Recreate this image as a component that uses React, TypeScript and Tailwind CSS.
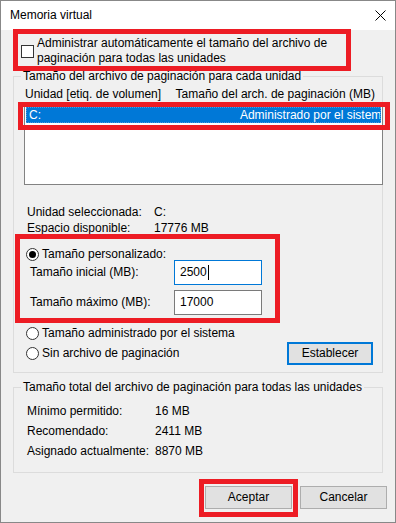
import React from "react";

const Radio = ({ checked = false }: { checked?: boolean }) => (
  <span className="flex h-[13px] w-[13px] shrink-0 items-center justify-center rounded-full border border-[#333333] bg-white">
    {checked && <span className="h-[7px] w-[7px] rounded-full bg-black" />}
  </span>
);

const Button = ({ label, focused = false }: { label: string; focused?: boolean }) => (
  <div
    className={
      focused
        ? "flex h-[23px] w-[86px] items-center justify-center border-2 border-[#0078d7] bg-[#e1e1e1]"
        : "flex h-[23px] w-[87px] items-center justify-center border border-[#adadad] bg-[#e1e1e1]"
    }
  >
    {label}
  </div>
);

const totals = [
  { label: "Mínimo permitido:", value: "16 MB" },
  { label: "Recomendado:", value: "2411 MB" },
  { label: "Asignado actualmente:", value: "8870 MB" },
];

const App = () => {
  return (
    <div className="relative h-[523px] w-[396px] overflow-hidden border border-[#888888] bg-[#f0f0f0] font-['Liberation_Sans',Arial,sans-serif] text-[12px] leading-[15px] text-black">
      {/* title bar */}
      <div className="flex h-[29px] items-center justify-between bg-white pl-[9px] pr-[9px]">
        <span>Memoria virtual</span>
        <svg width="11" height="11" viewBox="0 0 11 11">
          <path d="M0.5 0.5L10.5 10.5M10.5 0.5L0.5 10.5" stroke="#000" strokeWidth="1" />
        </svg>
      </div>

      {/* auto manage checkbox */}
      <div className="flex items-center pl-[20px] pt-[6px]">
        <span className="h-[13px] w-[13px] shrink-0 border border-[#333333] bg-white" />
        <span className="ml-[3px]">
          Administrar automáticamente el tamaño del archivo de
          <br />
          paginación para todas las unidades
        </span>
      </div>

      {/* per drive */}
      <fieldset className="mx-[12px] mt-[3px] w-[370px] min-w-0 border border-[#dcdcdc] px-[7px] pb-[7px]">
        <legend className="px-[2px] leading-[15px]">Tamaño del archivo de paginación para cada unidad</legend>
        <div className="ml-[4px] mt-[3px] flex whitespace-nowrap">
          <span className="w-[152px]">Unidad [etiq. de volumen]</span>
          <span>Tamaño del arch. de paginación (MB)</span>
        </div>
        <div className="ml-[3px] mt-[4px] h-[79px] w-[359px] border border-[#828282] bg-white">
          <div className="mx-[1px] flex h-[16px] items-center justify-between overflow-hidden whitespace-nowrap border border-dotted border-[#4d9be0] bg-[#0078d7] pl-[2px] leading-[16px] text-white">
            <span>C:</span>
            <span className="mr-[-8px]">Administrado por el sistema</span>
          </div>
        </div>

        <div className="ml-[6px] mt-[19px] leading-[16px]">
          <div className="flex">
            <span className="w-[127px]">Unidad seleccionada:</span>
            <span>C:</span>
          </div>
          <div className="flex">
            <span className="w-[127px]">Espacio disponible:</span>
            <span>17776 MB</span>
          </div>
        </div>

        <div className="ml-[5px] mt-[12px] flex h-[13px] items-center gap-[3px]">
          <Radio checked />
          <span>Tamaño personalizado:</span>
        </div>
        <div className="-mt-px flex h-[25px] items-center pl-[9px]">
          <span className="w-[144px]">Tamaño inicial (MB):</span>
          <div className="flex h-[25px] w-[88px] items-center border border-[#0078d7] bg-white pl-[5px]">
            <span>2500</span>
            <span className="ml-px h-[15px] w-px bg-black" />
          </div>
        </div>
        <div className="mt-[5px] flex h-[25px] items-center pl-[9px]">
          <span className="w-[144px]">Tamaño máximo (MB):</span>
          <div className="flex h-[25px] w-[88px] items-center border border-[#7a7a7a] bg-white pl-[5px]">
            <span>17000</span>
          </div>
        </div>

        <div className="ml-[5px] mt-[12px] flex h-[13px] items-center gap-[3px]">
          <Radio />
          <span>Tamaño administrado por el sistema</span>
        </div>
        <div className="mt-[2px] flex h-[23px] items-center">
          <div className="ml-[5px] flex items-center gap-[3px]">
            <Radio />
            <span>Sin archivo de paginación</span>
          </div>
          <div className="ml-auto mr-[2px]">
            <Button label="Establecer" focused />
          </div>
        </div>
      </fieldset>

      {/* totals */}
      <fieldset className="mx-[12px] mt-[7px] w-[370px] min-w-0 border border-[#dcdcdc] px-[7px] pb-[11px]">
        <legend className="px-[2px] leading-[15px]">
          Tamaño total del archivo de paginación para todas las unidades
        </legend>
        <div className="ml-[6px] mt-[6px] leading-[20px]">
          {totals.map((t) => (
            <div key={t.label} className="flex">
              <span className="w-[128px]">{t.label}</span>
              <span>{t.value}</span>
            </div>
          ))}
        </div>
      </fieldset>

      <div className="mt-[13px] flex justify-end gap-[8px] pr-[8px]">
        <Button label="Aceptar" />
        <Button label="Cancelar" />
      </div>

      {/* red annotation frames */}
      <div className="pointer-events-none absolute left-[12px] top-[28px] h-[42px] w-[338px] border-[5px] border-[#ed1c24]" />
      <div className="pointer-events-none absolute left-[17px] top-[101px] h-[28px] w-[372px] border-[5px] border-[#ed1c24]" />
      <div className="pointer-events-none absolute left-[14px] top-[233px] h-[89px] w-[265px] border-[5px] border-[#ed1c24]" />
      <div className="pointer-events-none absolute left-[198px] top-[478px] h-[38px] w-[99px] border-[5px] border-[#ed1c24]" />
    </div>
  );
};

export default App;
